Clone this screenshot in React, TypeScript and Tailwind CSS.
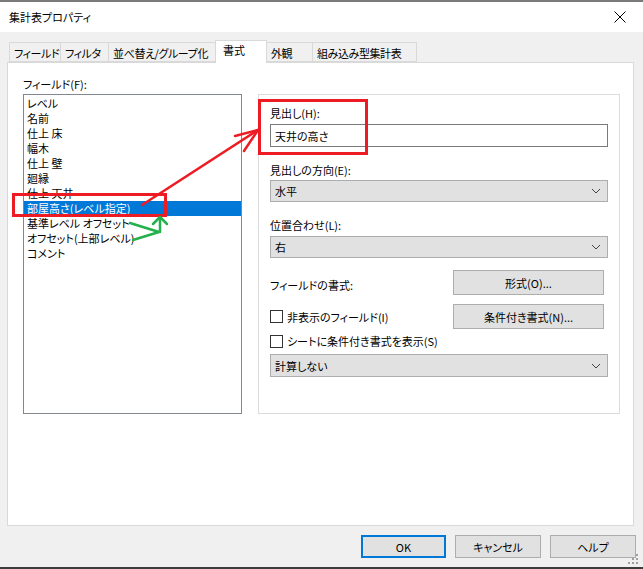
import React from "react";

const font = "font-['Noto_Sans_CJK_JP','Noto_Sans',sans-serif] [font-feature-settings:'palt'] text-[11px] leading-[16px] text-black";

const items = [
  "レベル",
  "名前",
  "仕上 床",
  "幅木",
  "仕上 壁",
  "廻縁",
  "仕上 天井",
  "部屋高さ(レベル指定)",
  "基準レベル オフセット",
  "オフセット(上部レベル)",
  "コメント",
];

const tabs = [
  { t: "フィールド", w: "w-[52px]" },
  { t: "フィルタ", w: "w-[49px]" },
  { t: "並べ替え/グループ化", w: "w-[108px]" },
  { t: "書式", w: "w-[52px]", sel: true },
  { t: "外観", w: "w-[47px]" },
  { t: "組み込み型集計表", w: "w-[105px]" },
];

function Chevron() {
  return (
    <svg width="10" height="6" viewBox="0 0 10 6" className="shrink-0">
      <path d="M1 1 L5 5 L9 1" fill="none" stroke="#444" strokeWidth="1" />
    </svg>
  );
}

function Select({ text, h = "h-[22px]" }: { text: string; h?: string }) {
  return (
    <div className={`${h} w-full bg-[#e1e1e1] border border-[#adadad] flex items-center pl-[4px] pr-[6px]`}>
      <span className="flex-1">{text}</span>
      <Chevron />
    </div>
  );
}

function Button({ text, className = "" }: { text: string; className?: string }) {
  return (
    <div className={`bg-[#e1e1e1] border border-[#adadad] flex items-center justify-center ${className}`}>
      {text}
    </div>
  );
}

function Checkbox({ text }: { text: string }) {
  return (
    <div className="flex items-center h-[16px]">
      <div className="w-[13px] h-[13px] bg-white border border-[#333]" />
      <span className="ml-[4px]">{text}</span>
    </div>
  );
}

export default function App() {
  return (
    <div className={`${font} w-[643px] h-[569px] bg-[#f0f0f0] relative overflow-hidden flex flex-col`}>
      <div className="h-[2px] bg-[#7a7a7a]" />
      <div className="h-[30px] bg-white flex items-center pl-[9px] pr-[17px]">
        <span className="flex-1">集計表プロパティ</span>
        <svg width="12" height="12" viewBox="0 0 12 12">
          <path d="M0.5 0.5 L11.5 11.5 M11.5 0.5 L0.5 11.5" stroke="#000" strokeWidth="1" />
        </svg>
      </div>
      <div className="flex-1 flex flex-col pt-[8px]">
        <div className="flex items-end h-[22px] pl-[9px]">
          {tabs.map((tab) =>
            tab.sel ? (
              <div
                key={tab.t}
                className={`${tab.w} h-[23px] -mb-[1px] relative z-10 bg-white border border-b-0 border-[#d9d9d9] pl-[7px] pt-[1px] -ml-[1px] whitespace-nowrap`}
              >
                {tab.t}
              </div>
            ) : (
              <div
                key={tab.t}
                className={`${tab.w} h-[20px] bg-[#f0f0f0] border border-[#d9d9d9] -ml-[1px] first:ml-0 pl-[4px] pt-[2px] whitespace-nowrap tracking-[-0.4px] overflow-hidden`}
              >
                {tab.t}
              </div>
            )
          )}
        </div>
        <div className="ml-[7px] w-[627px] h-[464px] bg-white border border-[#d9d9d9] flex pl-[15px] pt-[13px]">
          <div className="w-[219px] flex flex-col">
            <div className="h-[18px]">フィールド(F):</div>
            <div className="h-[320px] border border-[#828790] bg-white pt-[1px]">
              {items.map((it) =>
                it === "部屋高さ(レベル指定)" ? (
                  <div key={it} className="h-[15px] bg-[#0078d7] text-white pl-[3px] leading-[15px] whitespace-nowrap">
                    {it}
                  </div>
                ) : (
                  <div key={it} className="h-[15px] pl-[3px] leading-[15px] whitespace-nowrap">
                    {it}
                  </div>
                )
              )}
            </div>
          </div>
          <div className="ml-[16px] mt-[18px] w-[362px] h-[320px] border border-[#dcdcdc] pl-[11px] pr-[11px] pt-[10px] flex flex-col">
            <div>見出し(H):</div>
            <div className="mt-[3px] h-[23px] border border-[#7a7a7a] bg-white flex items-center pl-[4px]">天井の高さ</div>
            <div className="mt-[15px]">見出しの方向(E):</div>
            <div className="mt-[2px]">
              <Select text="水平" />
            </div>
            <div className="mt-[15px]">位置合わせ(L):</div>
            <div className="mt-[3px]">
              <Select text="右" />
            </div>
            <div className="mt-[12px] flex items-center h-[25px]">
              <span className="pt-[5px]">フィールドの書式:</span>
              <Button text="形式(O)..." className="ml-auto mr-[4px] w-[151px] h-[25px]" />
            </div>
            <div className="mt-[9px] flex items-center h-[25px]">
              <Checkbox text="非表示のフィールド(I)" />
              <Button text="条件付き書式(N)..." className="ml-auto mr-[4px] w-[151px] h-[25px]" />
            </div>
            <div className="mt-[4px]">
              <Checkbox text="シートに条件付き書式を表示(S)" />
            </div>
            <div className="mt-[5px]">
              <Select text="計算しない" h="h-[23px]" />
            </div>
          </div>
        </div>
        <div className="flex justify-end gap-[9px] pr-[7px] mt-[9px]">
          <div className="w-[85px] h-[23px] bg-[#e1e1e1] border-2 border-[#0078d7] flex items-center justify-center">OK</div>
          <Button text="キャンセル" className="w-[86px] h-[23px]" />
          <Button text="ヘルプ" className="w-[86px] h-[23px]" />
        </div>
      </div>
      <div className="h-[2px] bg-[#3c3c3c]" />

      <svg className="absolute inset-0 pointer-events-none" width="643" height="569" viewBox="0 0 643 569">
        <g fill="#a0a0a0">
          <rect x="636" y="558" width="2" height="2" />
          <rect x="632" y="562" width="2" height="2" />
          <rect x="636" y="562" width="2" height="2" />
          <rect x="628" y="562" width="2" height="2" />
          <rect x="636" y="554" width="2" height="2" />
          <rect x="632" y="558" width="2" height="2" />
        </g>
        <rect x="259.5" y="100.5" width="107" height="53" fill="none" stroke="#ed1c24" strokeWidth="3" />
        <rect x="13.5" y="194.5" width="152" height="21" fill="none" stroke="#ed1c24" strokeWidth="3" />
        <g stroke="#ed1c24" strokeWidth="2.5" strokeLinecap="round" fill="none">
          <path d="M142 205 L258 130" />
          <path d="M235 136 L258 130" />
          <path d="M244 151 L258 130" />
        </g>
        <g stroke="#22b14c" strokeWidth="2.5" strokeLinecap="round" strokeLinejoin="round" fill="none">
          <path d="M130 223 L159 232 L133 240" />
          <path d="M160 232 L160 218" />
          <path d="M153 224 L160 217 L167 224" />
        </g>
      </svg>
    </div>
  );
}
